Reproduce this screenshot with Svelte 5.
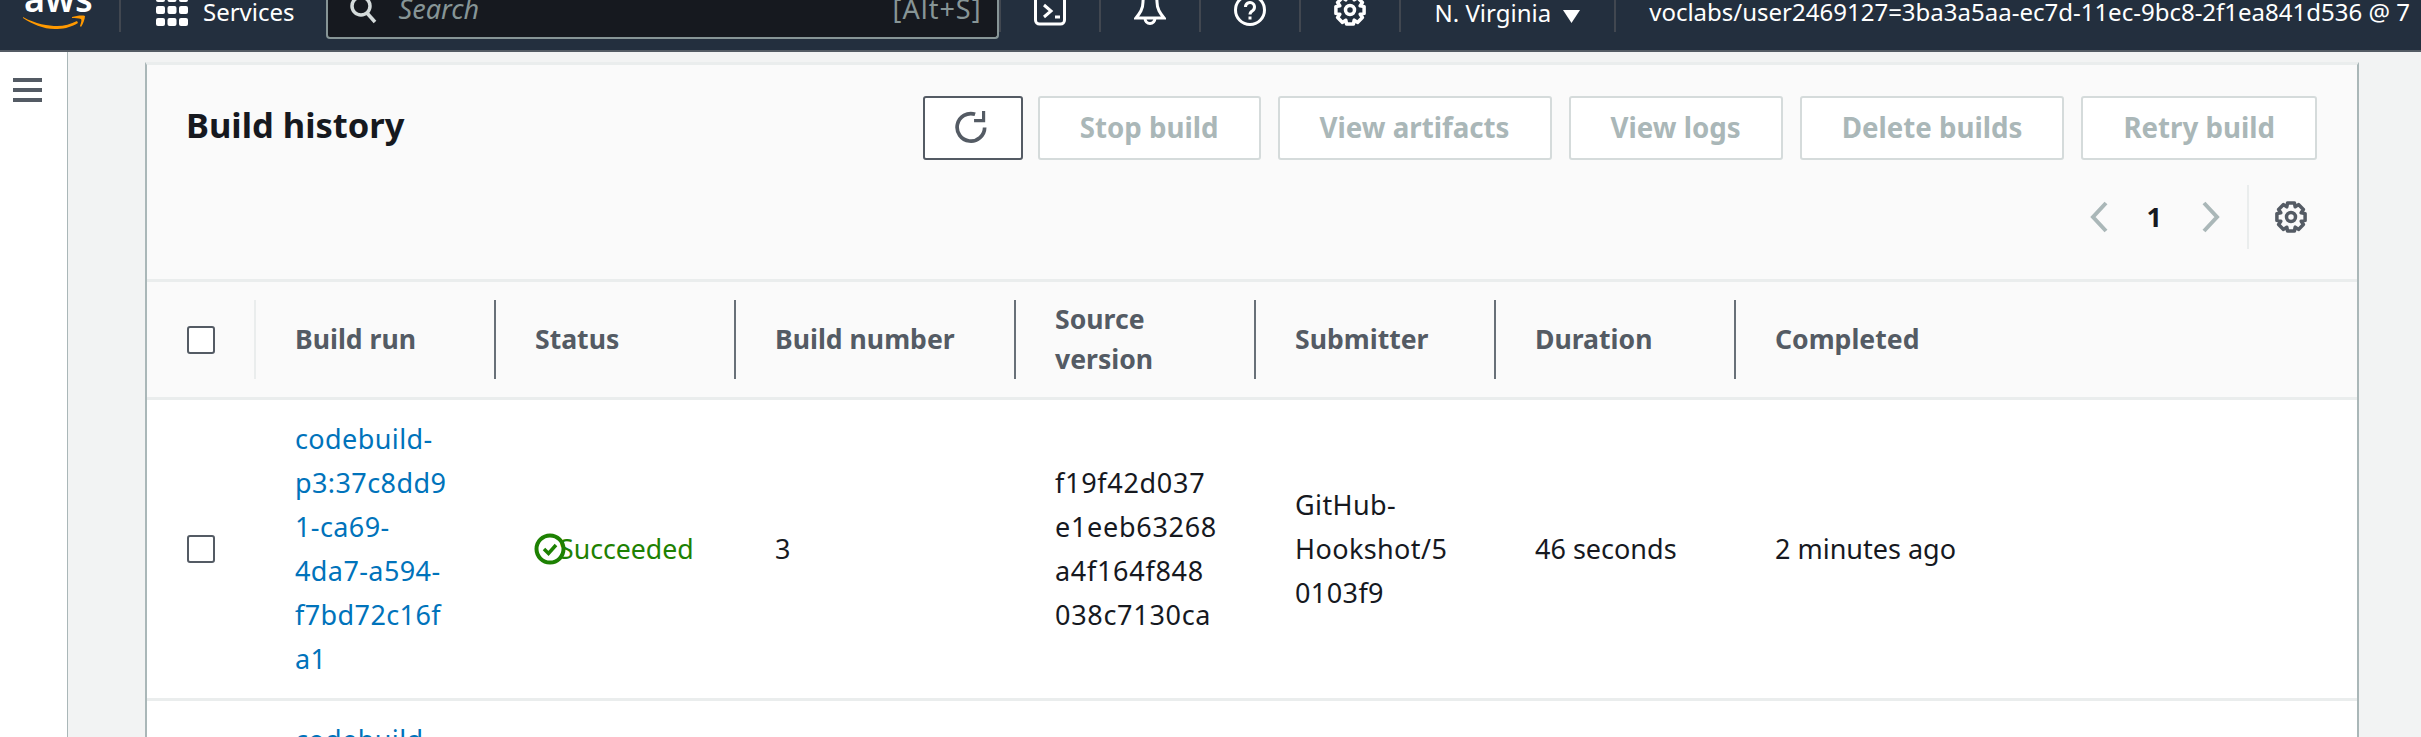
<script>
  const columns = ['Build run', 'Status', 'Build number', 'Source version', 'Submitter', 'Duration', 'Completed'];
  const actions = ['Stop build', 'View artifacts', 'View logs', 'Delete builds', 'Retry build'];

  // 8 tooth cog, same outline for the top bar and the table preferences icon
  function cog(c, outer, inner) {
    let d = '';
    for (let i = 0; i < 8; i++) {
      const a = (i * Math.PI) / 4;
      const pts = [[inner, a - 0.39], [outer, a - 0.24], [outer, a + 0.24], [inner, a + 0.39]];
      for (const [r, t] of pts) {
        d += `${d ? 'L' : 'M'}${(c + r * Math.sin(t)).toFixed(1)} ${(c - r * Math.cos(t)).toFixed(1)}`;
      }
    }
    return d + 'Z';
  }
  const gear = cog(16, 14.5, 11);
</script>

<div class="page">
  <header class="topbar">
    <div class="logo">
      <span class="aws">aws</span>
      <svg width="62" height="14" viewBox="0 0 62 14" fill="#ff9900"><path d="M0 2C12 9 26 11 34 11 41 11 48 9 54 6L55 8C47 13 39 14 32 14 20 14 9 9 0 3Z"/><path d="M49 2C53 1 59 0 62 1 62 4 60 9 58 12L57 11C58 8 59 5 58 4 56 3 52 3 49 3Z"/></svg>
    </div>
    <span class="sep first"></span>
    <svg class="grid-icon" width="32" height="32" viewBox="0 0 32 32" fill="#fff">
      {#each [0, 12, 24] as y}
        {#each [0, 11.5, 23] as x}
          <rect {x} {y} width="9" height="8" rx="2"/>
        {/each}
      {/each}
    </svg>
    <span class="services">Services</span>
    <div class="search">
      <svg width="30" height="30" viewBox="0 0 30 30" fill="none" stroke="#d5dbdb" stroke-width="3.5"><circle cx="12" cy="11" r="9"/><path d="M18 18l8 9"/></svg>
      <span class="placeholder">Search</span>
      <span class="shortcut">[Alt+S]</span>
    </div>
    <div class="top-icons">
      <span class="top-icon">
        <svg width="32" height="32" viewBox="0 0 32 32" fill="none" stroke="#fff" stroke-width="3"><rect x="1.500" y="-12" width="29" height="42" rx="4"/><path d="M10 11l7 6-7 6M21 23h5"/></svg>
      </span>
      <span class="top-icon">
        <svg width="32" height="32" viewBox="0 0 32 32" fill="none" stroke="#fff" stroke-width="3"><path d="M2 24C6 19 9 15 9 8 9 3 12 0 16 0 20 0 23 3 23 8 23 15 26 19 30 24Z"/><path d="M11 24a5 5.500 0 0 0 10 0"/></svg>
      </span>
      <span class="top-icon">
        <svg width="32" height="32" viewBox="0 0 32 32" fill="none" stroke="#fff" stroke-width="3"><circle cx="16" cy="16" r="14.500"/><path d="M11.500 13a4.500 4.500 0 1 1 7 3.700c-1.700 1-2.500 1.800-2.500 3.800M16 22.500v3"/></svg>
      </span>
      <span class="top-icon">
        <svg width="32" height="32" viewBox="0 0 32 32" fill="none" stroke="#fff" stroke-width="3.500" stroke-linejoin="round"><path d={gear}/><circle cx="16" cy="16" r="4.500"/></svg>
      </span>
    </div>
    <div class="region">
      <span>N. Virginia</span>
      <svg width="17" height="13" viewBox="0 0 17 13" fill="#fff"><path d="M0 0h17L8.500 13z"/></svg>
    </div>
    <span class="account">voclabs/user2469127=3ba3a5aa-ec7d-11ec-9bc8-2f1ea841d536 @ 7</span>
  </header>

  <div class="body">
    <aside class="side">
      <svg width="30" height="26" viewBox="0 0 30 26" fill="#545b64"><rect width="29" height="4"/><rect y="10" width="29" height="4"/><rect y="20" width="29" height="4"/></svg>
    </aside>
    <main class="main">
      <section class="panel">
        <div class="panel-head">
          <div class="title-row">
            <h2>Build history</h2>
            <div class="actions">
              <button class="refresh" aria-label="Refresh">
                <svg width="36" height="36" viewBox="0 0 34 34" fill="none" stroke="#545b64" stroke-width="3.500"><path d="M28 16.500A13 13 0 1 1 19 4"/><path d="M27 1v9h-9" stroke-width="3"/></svg>
              </button>
              {#each actions as action}
                <button disabled><span>{action}</span></button>
              {/each}
            </div>
          </div>
          <div class="pager">
            <svg width="20" height="32" viewBox="0 0 20 32" fill="none" stroke="#aab7b8" stroke-width="4"><path d="M17 2L4 16l13 14"/></svg>
            <span class="page-num">1</span>
            <svg width="20" height="32" viewBox="0 0 20 32" fill="none" stroke="#aab7b8" stroke-width="4"><path d="M3 2l13 14L3 30"/></svg>
            <span class="pager-sep"></span>
            <svg class="pager-gear" width="32" height="32" viewBox="0 0 32 32" fill="none" stroke="#545b64" stroke-width="3.500" stroke-linejoin="round"><path d={gear}/><circle cx="16" cy="16" r="4.500"/></svg>
          </div>
        </div>

        <table>
          <colgroup>
            <col class="c-check" />
            <col class="c-std" />
            <col class="c-std" />
            <col class="c-wide" />
            <col class="c-std" />
            <col class="c-std" />
            <col class="c-std" />
            <col />
          </colgroup>
          <thead>
            <tr>
              <th class="check"><span class="box"></span></th>
              {#each columns as col, i}
                <th><div class="th-inner" class:light={i === 0}>{col}</div></th>
              {/each}
            </tr>
          </thead>
          <tbody>
            <tr>
              <td class="check"><span class="box"></span></td>
              <td class="id"><a href="#run">codebuild-p3:37c8dd9<wbr />1-ca69-4da7-a594-f7bd72c16f<wbr />a1</a></td>
              <td>
                <span class="status">
                  <svg width="32" height="32" viewBox="0 0 32 32" fill="none" stroke="#1d8102"><circle cx="16" cy="16" r="13.500" stroke-width="4"/><path d="M10 16l4.500 4.500L22 12" stroke-width="3.500"/></svg>
                  <span class="status-text">Succeeded</span>
                </span>
              </td>
              <td>3</td>
              <td class="hash">f19f42d037<wbr />e1eeb63268<wbr />a4f164f848<wbr />038c7130ca</td>
              <td class="id">GitHub-Hookshot/5<wbr />0103f9</td>
              <td>46 seconds</td>
              <td>2 minutes ago</td>
            </tr>
            <tr>
              <td class="check"></td>
              <td class="id"><a href="#run">codebuild-</a></td>
              <td colspan="6"></td>
            </tr>
          </tbody>
        </table>
      </section>
    </main>
  </div>
</div>

<style>
  :global(body) {
    margin: 0;
    overflow: hidden;
  }

  .page {
    width: 2421px;
    height: 737px;
    overflow: hidden;
    font-family: "Noto Sans", "Open Sans", sans-serif;
    font-size: 27px;
    line-height: 44px;
    color: #16191f;
    background: #f2f3f3;
  }

  .topbar {
    display: flex;
    align-items: center;
    height: 50px;
    border-bottom: 2px solid #545b64;
    background: #232f3e;
    color: #fff;
    white-space: nowrap;
    overflow: hidden;
    box-sizing: content-box;
  }

  .logo {
    width: 66px;
    margin-left: 22px;
    height: 50px;
    position: relative;
  }

  .aws {
    position: absolute;
    left: 2px;
    top: -23px;
    font-size: 36px;
    font-weight: 600;
  }

  .logo svg {
    position: absolute;
    left: 1px;
    top: 15px;
  }

  .sep {
    width: 2px;
    height: 32px;
    background: #414750;
    align-self: flex-start;
  }

  .sep.first {
    margin-left: 31px;
  }

  .grid-icon {
    margin: -6px 0 0 35px;
    align-self: flex-start;
  }

  .services {
    margin: -26px 0 0 15px;
    font-size: 24px;
  }

  .search {
    display: flex;
    align-items: center;
    width: 673px;
    height: 39px;
    margin-left: 31px;
    align-self: flex-start;
    box-sizing: border-box;
    border: 2px solid #879596;
    border-top: 0;
    border-radius: 0 0 4px 4px;
    background: #16191f;
    padding: 0 15px 0 21px;
    overflow: hidden;
  }

  .search svg {
    margin-top: -18px;
    flex: none;
  }

  .placeholder {
    margin: -20px 0 0 20px;
    font-style: italic;
    font-size: 27px;
    color: #879596;
  }

  .shortcut {
    margin: -20px 0 0 auto;
    font-size: 27px;
    letter-spacing: 1px;
    color: #879596;
  }

  .top-icons {
    display: flex;
    align-self: flex-start;
    height: 32px;
    border-left: 2px solid #414750;
  }

  .top-icon {
    display: flex;
    justify-content: center;
    width: 98px;
    height: 32px;
    border-right: 2px solid #414750;
  }

  .top-icon svg {
    margin-top: -6px;
  }

  .region {
    display: flex;
    align-items: center;
    gap: 12px;
    align-self: flex-start;
    height: 32px;
    padding: 0 34px 0 34px;
    border-right: 2px solid #414750;
    font-size: 24px;
  }

  .region span {
    margin-top: -6px;
  }

  .account {
    margin: -26px 0 0 33px;
    font-size: 24px;
  }

  .body {
    display: flex;
    height: 685px;
  }

  .side {
    flex: none;
    width: 67px;
    border-right: 1px solid #aab7b8;
    background: #fff;
    padding-top: 26px;
  }

  .side svg {
    display: block;
    margin-left: 13px;
  }

  .main {
    flex: 1;
    padding: 10px 62px 0 77px;
  }

  .panel {
    border-top: 3px solid #eaeded;
    border-left: 2px solid #aab7b8;
    border-right: 2px solid #aab7b8;
    background: #fff;
    height: 700px;
  }

  .panel-head {
    height: 217px;
    background: #fafafa;
    box-sizing: border-box;
    padding: 31px 40px 0 39px;
    border-bottom: 3px solid #eaeded;
  }

  .title-row {
    display: flex;
    justify-content: space-between;
    align-items: center;
  }

  h2 {
    margin: 0;
    font-size: 34.5px;
    font-weight: 700;
    line-height: 44px;
    padding-bottom: 6px;
  }

  .actions {
    display: flex;
    gap: 17px;
  }

  button {
    height: 64px;
    padding: 0 40px 2px;
    border: 2px solid #d5dbdb;
    border-radius: 3px;
    background: #fff;
    color: #aab7b8;
    font: 700 27.7px "Noto Sans", "Open Sans", sans-serif;
  }

  .refresh {
    width: 100px;
    padding: 0;
    margin-right: -2px;
    border-color: #545b64;
  }

  .refresh svg {
    display: block;
    margin: 0 auto;
  }

  .pager {
    display: flex;
    align-items: center;
    justify-content: flex-end;
    margin-top: 25px;
    height: 64px;
  }

  .page-num {
    margin: 0 39px 0 38px;
    font-weight: 700;
  }

  .pager-sep {
    width: 2px;
    height: 64px;
    margin: 0 26px 0 26px;
    background: #eaeded;
  }

  .pager-gear {
    margin-right: 10px;
  }

  table {
    width: 100%;
    table-layout: fixed;
    border-collapse: collapse;
  }

  .c-check { width: 107px; }
  .c-std { width: 240px; }
  .c-wide { width: 280px; }

  th {
    height: 115px;
    padding: 0;
    background: #fafafa;
    border-bottom: 3px solid #eaeded;
    color: #545b64;
    font-size: 26.6px;
    font-weight: 700;
    text-align: left;
    line-height: 40px;
  }

  .th-inner {
    display: flex;
    align-items: center;
    height: 77px;
    padding: 0 20px 2px 39px;
    border-left: 2px solid #687078;
  }

  .th-inner.light {
    border-left-color: #eaeded;
  }

  td {
    padding: 17px 38px 17px 41px;
    border-bottom: 3px solid #eaeded;
    vertical-align: middle;
  }

  td.id {
    letter-spacing: 0.4px;
  }

  td.hash {
    letter-spacing: 0.7px;
  }

  th.check, td.check {
    padding: 0 0 0 40px;
    text-align: left;
  }

  .box {
    display: block;
    width: 24px;
    height: 24px;
    border: 2px solid #545b64;
    border-radius: 3px;
    background: #fff;
  }

  a {
    color: #0073bb;
    text-decoration: none;
  }

  .status {
    display: flex;
    align-items: center;
    margin-left: -1px;
    color: #1d8102;
    white-space: nowrap;
  }

  .status svg {
    flex: none;
  }

  .status-text {
    margin-left: -7px;
    font-size: 26.7px;
  }
</style>
